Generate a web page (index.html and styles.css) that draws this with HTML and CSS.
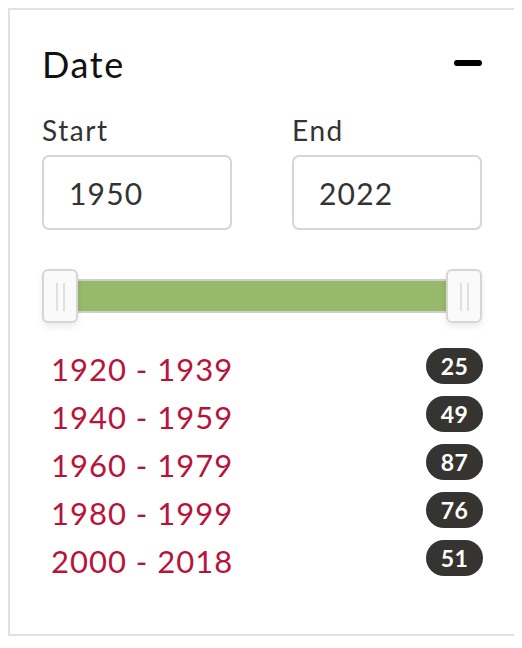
FILE: index.html
```html
<!DOCTYPE html>
<html lang="en">
<head>
<meta charset="utf-8">
<title>Date filter</title>
<link rel="stylesheet" href="styles.css">
</head>
<body>
<div class="card">
  <div class="header">
    <h2 class="title">Date</h2>
    <button class="collapse" aria-label="Collapse"><span class="minus"></span></button>
  </div>
  <div class="range">
    <label class="field">
      <span class="label">Start</span>
      <input class="input" type="text" value="1950">
    </label>
    <label class="field">
      <span class="label">End</span>
      <input class="input" type="text" value="2022">
    </label>
  </div>
  <div class="slider">
    <div class="track"><div class="fill"></div></div>
    <div class="handle handle-left"><span class="grip"></span><span class="grip"></span></div>
    <div class="handle handle-right"><span class="grip"></span><span class="grip"></span></div>
  </div>
  <ul class="facets">
    <li class="facet"><a class="facet-link" href="#">1920 - 1939</a><span class="badge">25</span></li>
    <li class="facet"><a class="facet-link" href="#">1940 - 1959</a><span class="badge">49</span></li>
    <li class="facet"><a class="facet-link" href="#">1960 - 1979</a><span class="badge">87</span></li>
    <li class="facet"><a class="facet-link" href="#">1980 - 1999</a><span class="badge">76</span></li>
    <li class="facet"><a class="facet-link" href="#">2000 - 2018</a><span class="badge">51</span></li>
  </ul>
</div>
</body>
</html>
```
FILE: styles.css
```css
* { box-sizing: border-box; }
html, body { background: #fff; }
body {
  margin: 8px;
  font-family: Lato, "Noto Sans", "Liberation Sans", sans-serif;
  color: #333;
}
.card {
  width: 508px;
  height: 628px;
  border: 2px solid #e1e1e1;
  padding: 32px 32px 0 32px;
  display: flex;
  flex-direction: column;
}
.header {
  display: flex;
  align-items: center;
  justify-content: space-between;
  height: 44px;
}
.title {
  margin: 0;
  font-size: 36px;
  line-height: 44px;
  font-weight: 400;
  color: #111;
  letter-spacing: 1.6px;
}
.collapse {
  border: 0;
  background: none;
  padding: 0;
  width: 30px;
  height: 30px;
  display: flex;
  align-items: center;
  justify-content: flex-end;
  margin-top: -2px;
}
.minus {
  display: block;
  width: 28px;
  height: 6px;
  border-radius: 3px;
  background: #000;
}
.range {
  display: grid;
  grid-template-columns: 190px 190px;
  column-gap: 60px;
  margin-top: 27px;
}
.field {
  display: flex;
  flex-direction: column;
  gap: 8px;
}
.label {
  font-size: 28px;
  line-height: 34px;
  color: #333;
  letter-spacing: 1.6px;
}
.input {
  width: 190px;
  height: 75px;
  border: 2px solid #d3d6da;
  border-radius: 7px;
  padding: 0 0 0 25px;
  font-family: inherit;
  font-size: 30px;
  color: #333;
  background: #fff;
  outline: none;
  letter-spacing: 1.2px;
}
.slider {
  position: relative;
  margin-top: 39px;
  height: 54px;
  width: 440px;
}
.track {
  margin-top: 10px;
  height: 34px;
  border-top: 2px solid #cfcfcf;
  border-bottom: 2px solid #cfcfcf;
  background: #e9e9e9;
}
.fill {
  height: 100%;
  background: #97b96a;
}
.handle {
  position: absolute;
  top: 0;
  width: 36px;
  height: 54px;
  border: 2px solid #d6d6d6;
  border-radius: 6px;
  background: #fafafa;
  box-shadow: 0 4px 6px rgba(0, 0, 0, 0.08);
  display: flex;
  justify-content: center;
  gap: 5px;
  padding-top: 12px;
}
.handle-left { left: 0; }
.handle-right { right: 0; }
.grip {
  display: block;
  width: 2px;
  height: 28px;
  background: #e0e0e0;
}
.facets {
  list-style: none;
  margin: 19px 0 0 0;
  padding: 0;
}
.facet {
  display: flex;
  align-items: center;
  justify-content: space-between;
  height: 48px;
}
.facet-link {
  color: #b8143b;
  text-decoration: none;
  font-size: 31px;
  line-height: 36px;
  padding-left: 9px;
  margin-top: 5px;
  letter-spacing: 1px;
}
.badge {
  width: 57px;
  height: 36px;
  border-radius: 18px;
  background: #363430;
  color: #fff;
  font-weight: 700;
  font-size: 23px;
  letter-spacing: 0.5px;
  display: flex;
  align-items: center;
  justify-content: center;
  margin-right: -1px;
}
```
